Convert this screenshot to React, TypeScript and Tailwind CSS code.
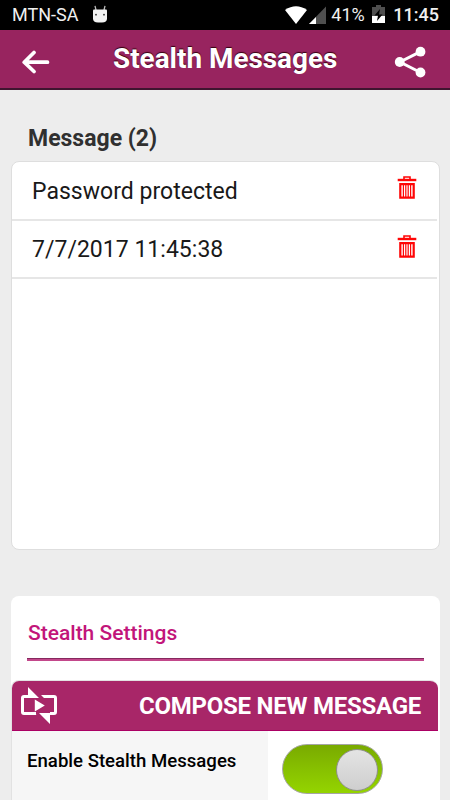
import React from 'react';

const messages = ['Password protected', '7/7/2017 11:45:38'];

function TrashIcon() {
  return (
    <svg className="w-5 h-6" viewBox="0 0 20 24" fill="none" stroke="#ff0606">
      <path d="M7 3.500V1h6v2.500" strokeWidth="1.600" />
      <path d="M.7 4h18.600" strokeWidth="2.400" />
      <path d="M3.300 8.200h13.400v13.500H3.300z" strokeWidth="2.200" />
      <path d="M6.400 8v13M8.800 8v13M11.200 8v13M13.600 8v13" strokeWidth="1.200" />
    </svg>
  );
}

function StatusBar() {
  return (
    <div className="h-[30px] bg-black text-[#f0f0f0] flex items-center pl-[12px] pr-[11px]">
      <span className="w-[67px] text-[18px] leading-[30px] whitespace-nowrap">MTN-SA</span>
      <svg className="ml-[13px] mb-[2px] w-4 h-[18px]" viewBox="0 0 16 18">
        <path d="M4 5 3 .8M12 5l1-4.2" stroke="#bbb" strokeWidth="1.300" />
        <path d="M2 4.500h12q1 0 1 1v8q0 4-5 4H6q-5 0-5-4v-8q0-1 1-1z" fill="#f4f4f4" />
        <circle cx="4" cy="9.700" r=".9" fill="#333" />
        <circle cx="12" cy="9.700" r=".9" fill="#333" />
      </svg>
      <div className="ml-auto flex items-center">
        <svg className="w-[22px] h-[18px]" viewBox="0 0 22 18">
          <path d="M0 4Q11-3.500 22 4L11 18z" fill="#fff" />
        </svg>
        <svg className="ml-[2px] w-[17px] h-[18px]" viewBox="0 0 17 18">
          <path d="M0 18 17 .5V18z" fill="#4f4f4f" />
          <path d="M0 18 7 11v7z" fill="#fff" />
        </svg>
        <span className="ml-[5px] w-[34px] text-[18px] leading-[30px]">41%</span>
        <svg className="ml-[7px] w-[13px] h-[18px] mb-[2px]" viewBox="0 0 13 18">
          <path d="M0 2h4V0h5v2h4v16H0z" fill="#4f4f4f" />
          <path d="M0 11h13v7H0z" fill="#fff" />
          <path d="M8 4 2.500 10.500h3.500L5 16l5.500-6.500H7z" fill="#000" />
        </svg>
        <span className="ml-[8px] text-[18px] leading-[30px] font-medium">11:45</span>
      </div>
    </div>
  );
}

function Header() {
  return (
    <header className="h-[60px] bg-[#98245f] border-b-2 border-[#3f152f] flex items-center pl-[22px] pr-6">
      <button className="w-7 mt-[6px]">
        <svg className="w-7 h-6" viewBox="0 0 28 24" fill="none" stroke="#fff" strokeWidth="3.700" strokeLinecap="round" strokeLinejoin="round">
          <path d="M12 2.500 2.200 12.200 12 21.500M3 12.200h22.500" />
        </svg>
      </button>
      <h1 className="ml-[63px] text-[27.900px] leading-8 font-bold text-white whitespace-nowrap [text-shadow:0_-1px_1px_#33000f]">Stealth Messages</h1>
      <button className="w-8 mt-[6px] ml-auto">
        <svg className="w-8 h-8" viewBox="0 0 32 32" fill="#fff">
          <path d="M26.500 5.700 6 16l20.500 10.500" fill="none" stroke="#fff" strokeWidth="3" />
          <circle cx="26.500" cy="5.700" r="4.900" />
          <circle cx="5.700" cy="16" r="4.900" />
          <circle cx="26.500" cy="26.500" r="4.900" />
        </svg>
      </button>
    </header>
  );
}

function Toggle() {
  return (
    <div className="w-[101px] h-[50px] rounded-full border border-[#a5a5a5] bg-linear-to-b from-[#79aa00] via-[#87c000] to-[#94d400] flex items-center justify-end pr-[4px] pt-[2px]">
      <div className="w-[42px] h-[42px] rounded-full border border-[#909090] bg-linear-to-b from-[#e4e4e4] to-[#cecece]" />
    </div>
  );
}

export default function App() {
  return (
    <div className="w-[450px] h-[800px] overflow-hidden bg-[#ededed] flex flex-col font-['Roboto',sans-serif]">
      <StatusBar />
      <Header />

      <main className="flex-1 min-h-0 pl-[11px] pr-[10px] pt-[33px]">
        <h2 className="pl-[17px] h-[38px] text-[23px] leading-8 font-bold text-[#303030]">Message (2)</h2>
        <ul className="h-[389px] rounded-lg border border-[#dedede] bg-white">
          {messages.map((message) => (
            <li key={message} className="h-[58.5px] mr-[2px] border-b-2 border-[#e6e6e6] pl-5 pr-5 flex items-center justify-between">
              <span className="pt-[3px] text-[23px] text-[#191919] tracking-[0.02px]">{message}</span>
              <button className="-mt-[4px]"><TrashIcon /></button>
            </li>
          ))}
        </ul>

        <section className="mt-[46px] h-[300px] rounded-lg bg-white">
          <div className="px-4 pt-[21px]">
            <h3 className="h-[41px] text-[21px] leading-8 pl-px font-medium text-[#c2157a]">Stealth Settings</h3>
            <div className="h-[3px] border-t border-[#86295e] bg-[#c3478b]" />
          </div>
          <div className="mt-[19px] mr-[2px] border-l border-t border-[#e2e2e2] rounded-t-lg overflow-hidden">
            <div className="h-[50px] bg-[#a82668] border-b border-[#ab0064] flex items-center justify-between pl-[8px] pr-[17px]">
              <svg className="w-[38px] h-[38px]" viewBox="0 0 38 38">
                <path d="M8 9.500H4q-1.500 0-1.500 1.500v14q0 1.500 1.500 1.500h12M24 9.500h10q1.500 0 1.500 1.500v14q0 1.500-1.500 1.500h-4" fill="none" stroke="#fff" strokeWidth="3" />
                <path d="M8 0v11h11zM21 8h4v3h-1zM11 25l3 0 2.500 3h-4zM30 37V26H19zM14.800 12.500v12l10-6z" fill="#fff" />
              </svg>
              <span className="text-[24px] font-bold text-white tracking-[-0.25px]">COMPOSE NEW MESSAGE</span>
            </div>
            <div className="h-[90px] flex">
              <div className="w-[256px] bg-[#f6f6f6] pl-[15px] pt-[14px] text-[18.600px] leading-8 font-medium text-black">Enable Stealth Messages</div>
              <div className="pl-[14px] pt-[13px]"><Toggle /></div>
            </div>
          </div>
        </section>
      </main>
    </div>
  );
}
